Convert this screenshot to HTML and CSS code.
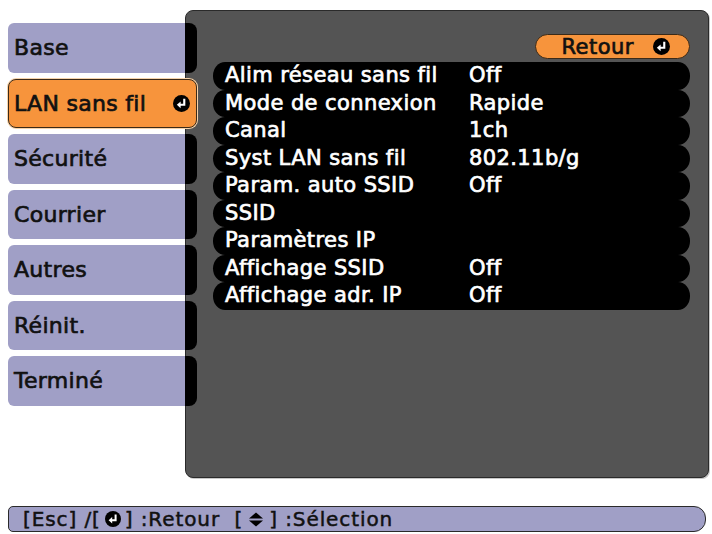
FILE: index.html
```html
<!DOCTYPE html>
<html lang="fr">
<head>
<meta charset="utf-8">
<title>LAN sans fil</title>
<link rel="stylesheet" href="styles.css">
</head>
<body>
<div class="screen">
  <div class="top">
    <nav class="menu">
      <div class="item"><span class="label">Base</span><span class="tab"></span></div>
      <div class="item sel"><span class="sel-text">LAN sans fil</span>
        <svg class="ret" viewBox="0 0 16 16"><circle cx="8" cy="8" r="8" fill="#000"/><path d="M10.6 3.6V9.2H6.2" fill="none" stroke="#fff" stroke-width="2"/><path d="M7.2 6 L3.6 9.2 L7.2 12.4 Z" fill="#fff"/></svg>
      </div>
      <div class="item"><span class="label">Sécurité</span><span class="tab"></span></div>
      <div class="item"><span class="label">Courrier</span><span class="tab"></span></div>
      <div class="item"><span class="label">Autres</span><span class="tab"></span></div>
      <div class="item"><span class="label">Réinit.</span><span class="tab"></span></div>
      <div class="item"><span class="label">Terminé</span><span class="tab"></span></div>
    </nav>
    <section class="panel">
      <div class="retour"><span>Retour</span>
        <svg class="ret" viewBox="0 0 16 16"><circle cx="8" cy="8" r="8" fill="#000"/><path d="M10.6 3.6V9.2H6.2" fill="none" stroke="#fff" stroke-width="2"/><path d="M7.2 6 L3.6 9.2 L7.2 12.4 Z" fill="#fff"/></svg>
      </div>
      <div class="list">
        <div class="row"><span>Alim réseau sans fil</span><span>Off</span></div>
        <div class="row"><span>Mode de connexion</span><span>Rapide</span></div>
        <div class="row"><span>Canal</span><span>1ch</span></div>
        <div class="row"><span>Syst LAN sans fil</span><span>802.11b/g</span></div>
        <div class="row"><span>Param. auto SSID</span><span>Off</span></div>
        <div class="row"><span>SSID</span><span></span></div>
        <div class="row"><span>Paramètres IP</span><span></span></div>
        <div class="row"><span>Affichage SSID</span><span>Off</span></div>
        <div class="row"><span>Affichage adr. IP</span><span>Off</span></div>
      </div>
    </section>
  </div>
  <div class="help">
    <span>[Esc] /[</span><svg class="ret small" viewBox="0 0 16 16"><circle cx="8" cy="8" r="8" fill="#000"/><path d="M10.6 3.6V9.2H6.2" fill="none" stroke="#fff" stroke-width="2"/><path d="M7.2 6 L3.6 9.2 L7.2 12.4 Z" fill="#fff"/></svg><span>] :Retour&nbsp;&nbsp;[</span><svg class="updown" viewBox="0 0 16 16"><path d="M1 7 L8 1 L15 7 Z" fill="#000"/><path d="M1 9 L8 15 L15 9 Z" fill="#000"/></svg><span>] :Sélection</span>
  </div>
</div>
</body>
</html>
```

FILE: styles.css
```css
html, body {
  margin: 0;
  padding: 0;
  background: #ffffff;
}

.screen {
  width: 712px;
  height: 534px;
  box-sizing: border-box;
  padding: 10px 0 0 8px;
  font-family: "DejaVu Sans", "Liberation Sans", sans-serif;
  font-weight: normal;
}

.top {
  display: flex;
  align-items: flex-start;
  height: 468px;
}

.menu {
  position: relative;
  z-index: 2;
  width: 189px;
  margin-top: 13px;
  display: flex;
  flex-direction: column;
  gap: 6px;
}

.item {
  display: flex;
  height: 49.5px;
  font-size: 22px;
  letter-spacing: 0.3px;
  color: #111;
  -webkit-text-stroke: 0.7px #111;
}

.label {
  width: 177px;
  box-sizing: border-box;
  padding-left: 6px;
  background: #a09fc6;
  border-radius: 6px 0 0 6px;
  line-height: 49.5px;
}

.tab {
  width: 12px;
  background: #000;
  border-radius: 0 8px 8px 0;
}

.item.sel {
  box-sizing: border-box;
  background: #f7943c;
  border: 1px solid #3b2a18;
  border-radius: 8px;
  align-items: center;
  justify-content: space-between;
  padding: 0 6px 0 5px;
  box-shadow: 0 0 0 1px #f6d2a8;
}

.ret {
  width: 17px;
  height: 17px;
  flex: none;
}

.panel {
  margin-left: -12px;
  width: 524px;
  height: 468px;
  box-sizing: border-box;
  background: #545454;
  border: 1px solid #2a2a2a;
  border-radius: 8px;
  box-shadow: 1px 1px 0 #c8c8c8;
  padding: 23px 18px 0 27px;
  display: flex;
  flex-direction: column;
}

.retour {
  align-self: flex-end;
  width: 155px;
  height: 25px;
  box-sizing: border-box;
  background: #f7943c;
  border: 1px solid #3b2a18;
  border-radius: 13px;
  display: flex;
  align-items: center;
  justify-content: flex-end;
  gap: 19px;
  padding-right: 19px;
  font-size: 21px;
  letter-spacing: 0.5px;
  color: #111;
  -webkit-text-stroke: 0.7px #111;
}

.list {
  margin-top: 3px;
  display: flex;
  flex-direction: column;
}

.row {
  height: 27.5px;
  line-height: 27.5px;
  background: #000;
  border-radius: 12px / 13.75px;
  padding-left: 12px;
  display: grid;
  grid-template-columns: 244px 1fr;
  color: #fff;
  font-size: 21px;
  letter-spacing: 0.4px;
  -webkit-text-stroke: 0.7px #fff;
}

.help {
  margin-top: 28px;
  width: 698px;
  height: 26px;
  box-sizing: border-box;
  background: #a09fc6;
  border: 1px solid #2a2a2a;
  border-radius: 5px 12px 12px 5px;
  display: flex;
  align-items: center;
  padding-left: 14px;
  font-size: 20px;
  letter-spacing: 0.9px;
  color: #111;
  -webkit-text-stroke: 0.5px #111;
  white-space: pre;
}

.ret.small {
  width: 16px;
  height: 16px;
  margin: 0 4px;
}

.updown {
  width: 16px;
  height: 17px;
  margin: 0 5px;
}
```
